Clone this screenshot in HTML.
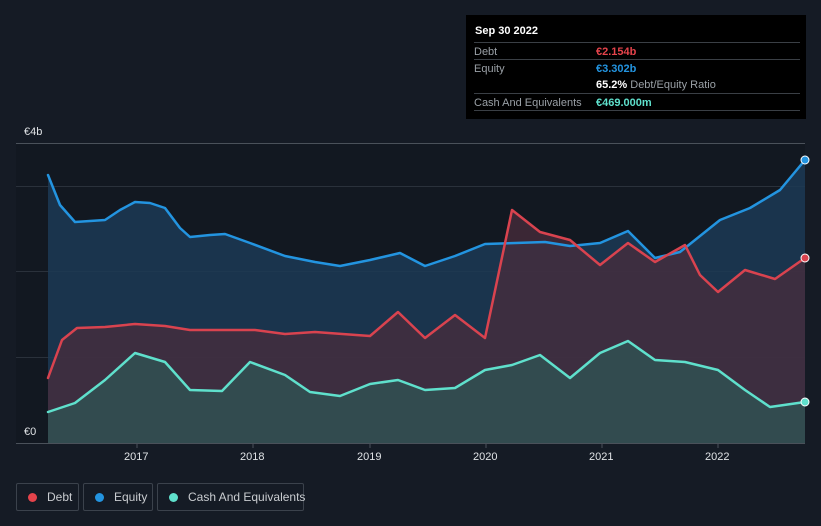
<!DOCTYPE html><html><head><meta charset="utf-8"><style>
body{margin:0;width:821px;height:526px;background:#151b25;font-family:"Liberation Sans",sans-serif;overflow:hidden;position:relative}
.tt{position:absolute;left:466px;top:15px;width:340px;height:104px;background:#000;color:#fff;font-size:11px}
.r{position:absolute;left:8px;width:326px;border-top:1px solid #3a3f45;height:17px}
.r span{position:absolute;top:3px;white-space:nowrap}
.l{color:#9aa0a6;left:0}.v{left:122px;font-weight:bold}
.lg{position:absolute;top:483px;height:26px;border:1px solid #3b424c;border-radius:2px;color:#c9ccd0;font-size:12px;line-height:26px;white-space:nowrap;box-sizing:border-box;height:28px}
.dot{display:inline-block;width:9px;height:9px;border-radius:50%;margin:0 10px 0 11px;vertical-align:-1px}
.ax{position:absolute;color:#e0e3e6;font-size:11px}
</style></head><body>
<svg width="821" height="526" style="position:absolute;left:0;top:0">
<rect x="16" y="143" width="789" height="300" fill="#121821"/>
<g stroke="#2a313b" stroke-width="1"><line x1="16" y1="143.5" x2="805" y2="143.5" stroke="#4a515a"/><line x1="16" y1="186.5" x2="805" y2="186.5"/><line x1="16" y1="271.5" x2="805" y2="271.5"/><line x1="16" y1="357.5" x2="805" y2="357.5"/><line x1="16" y1="443.5" x2="805" y2="443.5" stroke="#4a515a"/></g>
<g stroke="#4a515a"><line x1="137" y1="443" x2="137" y2="448"/><line x1="253" y1="443" x2="253" y2="448"/><line x1="370" y1="443" x2="370" y2="448"/><line x1="486" y1="443" x2="486" y2="448"/><line x1="602" y1="443" x2="602" y2="448"/><line x1="718" y1="443" x2="718" y2="448"/></g>
<polygon fill="#1c3a55" fill-opacity="0.85" points="48,443 48,175 60,205 75,222 105,220 120,210 135,202 150,203 165,208 180,228 190,237 210,235 225,234 250,243 285,256 315,262 340,266 370,260 400,253 425,266 455,256 485,244 545,242 570,246 600,243 628,231 655,258 680,252 720,220 750,208 780,190 805,160 805,443"/>
<polygon fill="#4a2c3c" fill-opacity="0.75" points="48,443 48,378 62,340 77,328 105,327 135,324 165,326 190,330 255,330 285,334 315,332 370,336 398,312 425,338 455,315 485,338 512,210 540,232 570,240 600,265 628,243 655,262 685,245 700,275 718,292 745,270 775,279 805,258 805,443"/>
<polygon fill="#2f5353" fill-opacity="0.8" points="48,443 48,412 75,403 105,380 135,353 165,362 190,390 222,391 250,362 285,375 310,392 340,396 370,384 398,380 425,390 455,388 485,370 512,365 540,355 570,378 600,353 628,341 655,360 685,362 718,370 745,390 770,407 805,402 805,443"/>
<g fill="none" stroke-width="2.5" stroke-linejoin="round" stroke-linecap="round">
<polyline stroke="#2394e0" points="48,175 60,205 75,222 105,220 120,210 135,202 150,203 165,208 180,228 190,237 210,235 225,234 250,243 285,256 315,262 340,266 370,260 400,253 425,266 455,256 485,244 545,242 570,246 600,243 628,231 655,258 680,252 720,220 750,208 780,190 805,160"/>
<polyline stroke="#d9434f" points="48,378 62,340 77,328 105,327 135,324 165,326 190,330 255,330 285,334 315,332 370,336 398,312 425,338 455,315 485,338 512,210 540,232 570,240 600,265 628,243 655,262 685,245 700,275 718,292 745,270 775,279 805,258"/>
<polyline stroke="#5fe0cc" points="48,412 75,403 105,380 135,353 165,362 190,390 222,391 250,362 285,375 310,392 340,396 370,384 398,380 425,390 455,388 485,370 512,365 540,355 570,378 600,353 628,341 655,360 685,362 718,370 745,390 770,407 805,402"/>
</g>
<circle cx="805" cy="160" r="4" fill="#2394e0" stroke="#fff" stroke-width="1"/>
<circle cx="805" cy="258" r="4" fill="#d9434f" stroke="#fff" stroke-width="1"/>
<circle cx="805" cy="402" r="4" fill="#5fe0cc" stroke="#fff" stroke-width="1"/>
</svg>
<div class="ax" style="left:24px;top:126px">€4b</div>
<div class="ax" style="left:24px;top:426px">€0</div>
<div class="ax" style="left:124px;top:451px">2017</div>
<div class="ax" style="left:240px;top:451px">2018</div>
<div class="ax" style="left:357px;top:451px">2019</div>
<div class="ax" style="left:473px;top:451px">2020</div>
<div class="ax" style="left:589px;top:451px">2021</div>
<div class="ax" style="left:705px;top:451px">2022</div>
<div class="tt">
<div style="position:absolute;left:9px;top:10px;font-weight:bold">Sep 30 2022</div>
<div class="r" style="top:27px"><span class="l">Debt</span><span class="v" style="color:#e5434b">€2.154b</span></div>
<div class="r" style="top:44px"><span class="l">Equity</span><span class="v" style="color:#2394e0">€3.302b</span></div>
<div class="r" style="top:61px;border:none"><span class="v" style="color:#fff">65.2% <b style="color:#9aa0a6;font-weight:normal">Debt/Equity Ratio</b></span></div>
<div class="r" style="top:78px"><span class="l">Cash And Equivalents</span><span class="v" style="color:#5fe0cc">€469.000m</span></div>
<div class="r" style="top:95px;height:0"></div>
</div>
<div class="lg" style="left:16px;width:63px"><span class="dot" style="background:#e5434b"></span>Debt</div>
<div class="lg" style="left:83px;width:70px"><span class="dot" style="background:#2394e0"></span>Equity</div>
<div class="lg" style="left:157px;width:147px"><span class="dot" style="background:#5fe0cc"></span>Cash And Equivalents</div>
</body></html>
